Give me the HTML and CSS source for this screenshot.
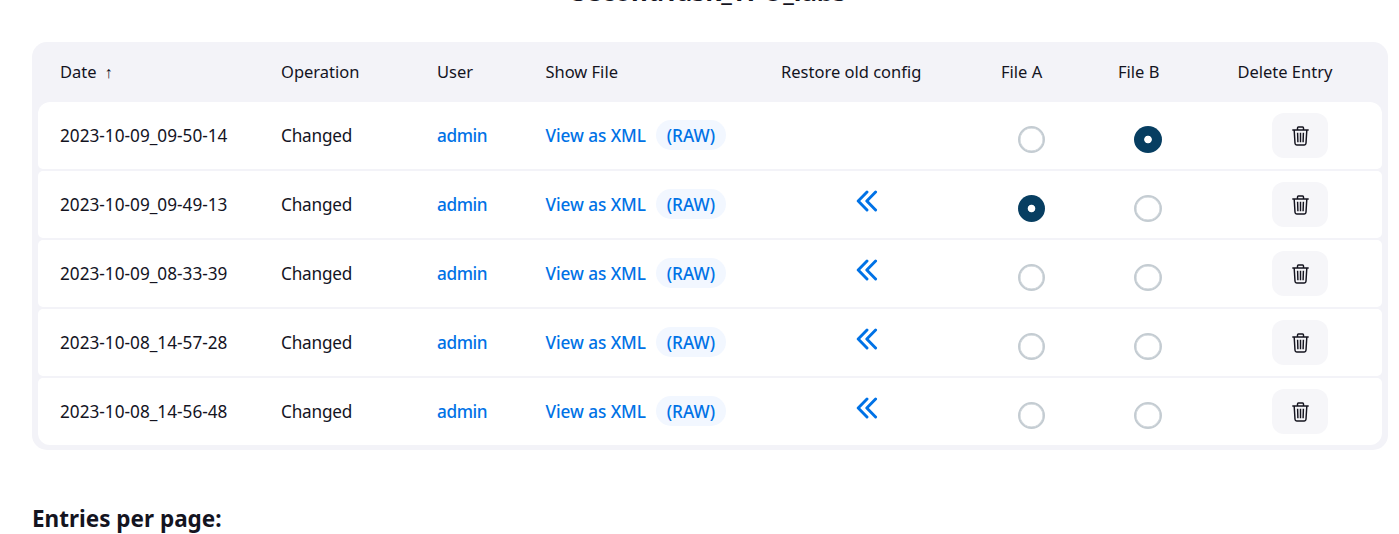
FILE: index.html
```html
<!DOCTYPE html>
<html lang="en">
<head>
<meta charset="utf-8">
<title>Configuration history</title>
<link rel="stylesheet" href="styles.css">
</head>
<body>
<svg class="symbols" aria-hidden="true">
  <symbol id="trash" viewBox="0 0 17 20">
    <path d="M.3 4h16.400M5.500 3.800V1.900q0-.9.9-.9h4.200q.9 0 .9.9v1.900M2.200 4.300L3 17.300q.1 1.700 1.700 1.700h7.600q1.600 0 1.700-1.700l.8-13M5.600 6.700l.3 9.600M8.500 6.700v9.600M11.400 6.700l-.3 9.600" fill="none" stroke="currentColor" stroke-width="1.450"/>
  </symbol>
  <symbol id="restore" viewBox="0 0 22 22">
    <path d="M11 2L2.200 11l8.800 9M19.600 2l-8.800 9 8.800 9" fill="none" stroke="currentColor" stroke-width="2.900" stroke-linecap="round" stroke-linejoin="round"/>
  </symbol>
</svg>
<h1 class="title">SecondTask_TPO_labs</h1>
<main class="history">
  <div class="row head"><span>Date<span class="sort">↑</span></span><span>Operation</span><span>User</span><span>Show File</span><span>Restore old config</span><span>File A</span><span>File B</span><span>Delete Entry</span></div>
  <div class="rows">
    <div class="row entry"><span class="date">2023-10-09_09-50-14</span><span class="op">Changed</span><a class="user">admin</a><span class="files"><a class="xml">View as XML</a><a class="raw">(RAW)</a></span><span></span><i class="radio"></i><i class="radio file-b checked"></i><button class="delete" aria-label="Delete"><svg><use href="#trash"/></svg></button></div>
    <div class="row entry"><span class="date">2023-10-09_09-49-13</span><span class="op">Changed</span><a class="user">admin</a><span class="files"><a class="xml">View as XML</a><a class="raw">(RAW)</a></span><a class="restore"><svg><use href="#restore"/></svg></a><i class="radio checked"></i><i class="radio file-b"></i><button class="delete" aria-label="Delete"><svg><use href="#trash"/></svg></button></div>
    <div class="row entry"><span class="date">2023-10-09_08-33-39</span><span class="op">Changed</span><a class="user">admin</a><span class="files"><a class="xml">View as XML</a><a class="raw">(RAW)</a></span><a class="restore"><svg><use href="#restore"/></svg></a><i class="radio"></i><i class="radio file-b"></i><button class="delete" aria-label="Delete"><svg><use href="#trash"/></svg></button></div>
    <div class="row entry"><span class="date">2023-10-08_14-57-28</span><span class="op">Changed</span><a class="user">admin</a><span class="files"><a class="xml">View as XML</a><a class="raw">(RAW)</a></span><a class="restore"><svg><use href="#restore"/></svg></a><i class="radio"></i><i class="radio file-b"></i><button class="delete" aria-label="Delete"><svg><use href="#trash"/></svg></button></div>
    <div class="row entry"><span class="date">2023-10-08_14-56-48</span><span class="op">Changed</span><a class="user">admin</a><span class="files"><a class="xml">View as XML</a><a class="raw">(RAW)</a></span><a class="restore"><svg><use href="#restore"/></svg></a><i class="radio"></i><i class="radio file-b"></i><button class="delete" aria-label="Delete"><svg><use href="#trash"/></svg></button></div>
  </div>
</main>
<h2 class="per-page">Entries per page:</h2>
</body>
</html>
```
FILE: styles.css
```css
* { box-sizing: border-box; }
html { overflow: hidden; }
body { margin: 0; height: 534px; overflow: hidden; background: #fff; color: #14141f; font-family: "Noto Sans", "Open Sans", sans-serif; }
.symbols { display: none; }
.title { margin: -26px 0 0 19px; height: 68px; font-size: 25.8px; line-height: 34px; font-weight: 700; text-align: center; }
.history { margin-left: 32px; width: 1356px; height: 408px; padding: 0 6px 5px; border-radius: 15px; background: #f3f3f8; }
.row { display: grid; grid-template-columns: 221px 156px 108.4px 235.600px 220px 117px 119.400px 1fr; padding-left: 22px; align-items: center; white-space: nowrap; }
.head { height: 60px; padding-bottom: 2px; font-size: 16.5px; }
.sort { margin-left: 8px; font-family: "Liberation Sans", sans-serif; font-size: 16px; line-height: 1; }
.rows { display: grid; gap: 2px; }
.entry { height: 67px; background: #fff; border-radius: 5px; font-size: 17.2px; }
.entry:first-child { border-radius: 12px 12px 5px 5px; }
.entry:last-child { border-radius: 5px 5px 12px 12px; }
.op { letter-spacing: -.2px; }
.user, .files { color: #0072e6; font-weight: 500; }
.user { letter-spacing: -.4px; }
.files { display: flex; align-items: center; gap: 10px; }
.xml { width: 101px; letter-spacing: -.06px; }
.raw { margin-top: -1px; width: 70px; height: 30px; padding-right: 1px; border-radius: 15px; background: #f2f7ff; line-height: 31px; text-align: center; }
.restore { margin: -7px 0 0 75px; height: 22px; color: #0072e6; }
.restore svg { display: block; width: 22px; height: 22px; }
.radio { margin: 8px 0 0 17px; width: 27px; height: 27px; border: 2.5px solid #c4ccd2; border-radius: 50%; box-shadow: inset 0 0 0 .5px #c4ccd2; }
.file-b { margin-left: 16px; width: 28px; }
.checked { border: 0; box-shadow: none; background: radial-gradient(circle, #fff 3.400px, #073e61 4.200px); }
.delete { display: flex; align-items: center; justify-content: center; margin-left: 34.600px; padding: 1px 0 0 1px; width: 56px; height: 45px; border: 0; border-radius: 12px; background: #f6f6f9; color: #14141f; }
.delete svg { width: 17px; height: 20px; }
.per-page { margin: 53px 0 0 32px; font-size: 22.500px; line-height: 32px; font-weight: 700; }
```
